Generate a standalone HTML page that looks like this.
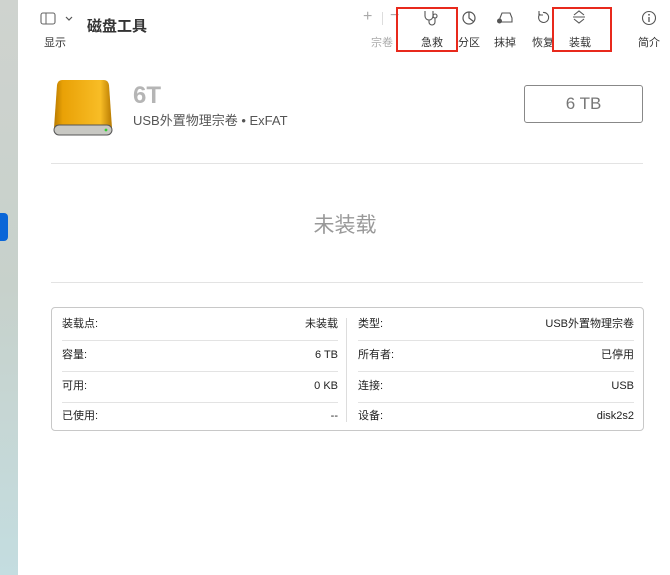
<!DOCTYPE html>
<html><head><meta charset="utf-8"><style>
*{margin:0;padding:0;box-sizing:border-box}
body{width:670px;height:575px;background:#fff;font-family:"Liberation Sans","Noto Sans CJK SC",sans-serif;position:relative;overflow:hidden;color:#333}
.a{position:absolute}
.side{left:0;top:0;width:18px;height:575px;background:linear-gradient(#cfd3cf,#c7d1cb 50%,#c4dde0)}
.pill{left:0;top:213px;width:8px;height:28px;background:#0a66d8;border-radius:0 4px 4px 0}
.lbl{font-size:11px;color:#333;top:34px}
.ic{top:9px;font-size:14px;color:#444}
.red{border:2px solid #e8291c}
.hr{height:1px;background:#e3e3e3;left:51px;width:592px}
.row{position:absolute;left:10px;width:276px;height:16px;font-size:11px;line-height:16px;color:#222;display:flex;justify-content:space-between;align-items:center}
.row span{display:block;height:16px;line-height:16px}
.rowr{left:306px;width:276px}
.sep{position:absolute;left:10px;width:276px;height:1px;background:#e3e3e3}
</style></head><body>
<div class="a side"></div><div class="a pill"></div>
<svg class="a" style="left:40px;top:12px" width="34" height="14"><rect x="1" y="1" width="14" height="11" rx="2" fill="none" stroke="#666" stroke-width="1.1"/><line x1="6" y1="1" x2="6" y2="12" stroke="#666"/><path d="M26 5 l3 3 l3 -3" fill="none" stroke="#555" stroke-width="1.2"/></svg>
<div class="a lbl" style="left:44px">显示</div>
<div class="a" style="left:87px;top:15px;font-size:15px;font-weight:bold;color:#333">磁盘工具</div>
<div class="a ic" style="left:363px;top:8px;color:#aaa;font-size:16px">+</div>
<div class="a" style="left:382px;top:12px;width:1px;height:13px;background:#ddd"></div>
<div class="a ic" style="left:390px;top:7px;color:#aaa;font-size:16px">−</div>
<div class="a lbl" style="left:371px;color:#aaa">宗卷</div>
<svg class="a" style="left:422px;top:9px" width="20" height="18"><path d="M3 2 v5 a4 4 0 0 0 8 0 v-5 M7 11 v2 a3 3 0 0 0 6 0 v-4 a2 2 0 1 1 0.1 0" fill="none" stroke="#555" stroke-width="1.1"/></svg>
<div class="a lbl" style="left:421px">急救</div>
<svg class="a" style="left:461px;top:10px" width="16" height="16"><circle cx="8" cy="8" r="6" fill="none" stroke="#555" stroke-width="1.2"/><path d="M8 2 v6 l4.5 3.5" fill="none" stroke="#555" stroke-width="1.2"/></svg>
<div class="a lbl" style="left:458px">分区</div>
<svg class="a" style="left:496px;top:11px" width="20" height="14"><path d="M4 7 l2 -5 h8 l2 5 v4 h-12z" fill="none" stroke="#555" stroke-width="1.1"/><circle cx="3.5" cy="10" r="2.5" fill="#555"/></svg>
<div class="a lbl" style="left:494px">抹掉</div>
<svg class="a" style="left:535px;top:9px" width="16" height="16"><path d="M5 5 a5 5 0 1 0 3 -1.5 M4 2 v4 h4" fill="none" stroke="#555" stroke-width="1.1"/></svg>
<div class="a lbl" style="left:532px">恢复</div>
<svg class="a" style="left:571px;top:9px" width="16" height="16"><path d="M3 6 l5 -4 l5 4 M3 10 l5 4 l5 -4 M2 8 h12" fill="none" stroke="#555" stroke-width="1.1"/></svg>
<div class="a lbl" style="left:569px">装载</div>
<svg class="a" style="left:641px;top:10px" width="16" height="16"><circle cx="8" cy="8" r="6.5" fill="none" stroke="#555" stroke-width="1.1"/><line x1="8" y1="7" x2="8" y2="12" stroke="#555" stroke-width="1.3"/><circle cx="8" cy="4.8" r="0.9" fill="#555"/></svg>
<div class="a lbl" style="left:638px">简介</div>
<div class="a red" style="left:396px;top:7px;width:62px;height:45px"></div>
<div class="a red" style="left:552px;top:7px;width:60px;height:45px"></div>
<svg class="a" style="left:52px;top:78px" width="62" height="60"><defs><linearGradient id="g" x1="0" x2="1"><stop offset="0" stop-color="#b87a00"/><stop offset=".15" stop-color="#e9a106"/><stop offset=".8" stop-color="#f8bd26"/><stop offset="1" stop-color="#b87a00"/></linearGradient></defs><path d="M10 2 h42 q4 0 5 5 l3 43 h-58 l3 -43 q1 -5 5 -5z" fill="url(#g)"/><rect x="2" y="47" width="58" height="10" rx="5" fill="#c8c8c3" stroke="#555" stroke-width="1"/><circle cx="54" cy="52" r="1.4" fill="#3c3"/></svg>
<div class="a" style="left:133px;top:82px;font-size:24px;font-weight:bold;color:#b5b5b5">6T</div>
<div class="a" style="left:133px;top:110px;font-size:13px;color:#555">USB外置物理宗卷 • ExFAT</div>
<div class="a" style="left:524px;top:85px;width:119px;height:38px;border:1px solid #888;border-radius:3px;font-size:17px;color:#777;text-align:center;line-height:36px">6 TB</div>
<div class="a hr" style="top:163px"></div>
<div class="a" style="left:0;width:690px;top:209px;text-align:center;font-size:21px;color:#999">未装载</div>
<div class="a hr" style="top:282px"></div>
<div class="a" style="left:51px;top:307px;width:593px;height:124px;border:1px solid #c8c8c8;border-radius:4px">
<div class="a" style="left:294px;top:10px;width:1px;height:104px;background:#ddd"></div>
<div class="row" style="top:8px"><span>装载点:</span><span>未装载</span></div>
<div class="sep" style="top:32px"></div>
<div class="row" style="top:39px"><span>容量:</span><span>6 TB</span></div>
<div class="sep" style="top:63px"></div>
<div class="row" style="top:70px"><span>可用:</span><span>0 KB</span></div>
<div class="sep" style="top:94px"></div>
<div class="row" style="top:100px"><span>已使用:</span><span>--</span></div>
<div class="row rowr" style="top:8px"><span>类型:</span><span>USB外置物理宗卷</span></div>
<div class="sep" style="left:306px;top:32px"></div>
<div class="row rowr" style="top:39px"><span>所有者:</span><span>已停用</span></div>
<div class="sep" style="left:306px;top:63px"></div>
<div class="row rowr" style="top:70px"><span>连接:</span><span>USB</span></div>
<div class="sep" style="left:306px;top:94px"></div>
<div class="row rowr" style="top:100px"><span>设备:</span><span>disk2s2</span></div>
</div>
</body></html>
